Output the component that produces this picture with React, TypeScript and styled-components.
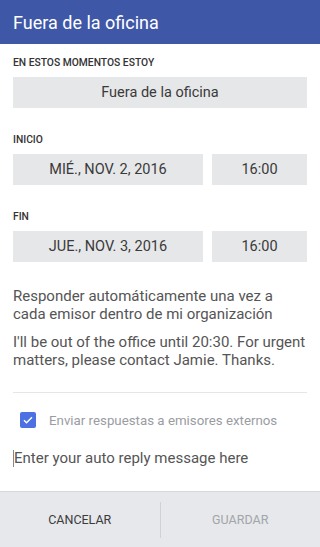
import styled, { createGlobalStyle } from "styled-components";

const Global = createGlobalStyle`
  html, body { margin: 0; padding: 0; background: #fff; }
  body { font-family: Roboto, "Noto Sans", Arial, sans-serif; }
  * { box-sizing: border-box; }
`;

const Screen = styled.div`
  width: 320px; height: 547px;
  display: flex; flex-direction: column;
  background: #fff;
  overflow: hidden;
`;
const Header = styled.header`
  height: 44px; flex: none;
  background: #3f57a7;
  color: #fff;
  display: flex; align-items: center;
  padding: 0 13px;
  font-size: 18px;
`;
const Body = styled.div`
  flex: 1;
  padding: 12px 13px 0;
  display: flex; flex-direction: column;
`;
const Label = styled.div`
  font-size: 10.3px; font-weight: 500;
  color: #333;
  height: 13px; line-height: 13px;
  margin-bottom: 8px;
`;
const Row = styled.div`
  display: flex; gap: 9px;
  margin-bottom: 25px;
`;
const Field = styled.div<{ $w?: number }>`
  height: 31px;
  background: #e6e7e9;
  color: #3a3a3a;
  font-size: 14.5px;
  display: flex; align-items: center; justify-content: center;
  ${(p) => (p.$w ? `width: ${p.$w}px;` : "flex: 1;")}
`;
const Para = styled.p`
  margin: 0 0 10px;
  font-size: 15px; line-height: 18px;
  color: #555;
`;
const Divider = styled.hr`
  border: none; border-top: 1px solid #e6e6e6;
  margin: 13px 0 0;
`;
const CheckRow = styled.label`
  display: flex; align-items: center; gap: 13px;
  height: 54px;
  padding-left: 7px;
  font-size: 13.3px; color: #9a9ca3;
`;
const Box = styled.span`
  width: 16px; height: 16px; border-radius: 2px;
  background: #4d70e3;
  display: flex; align-items: center; justify-content: center;
`;
const Reply = styled.div`
  font-size: 15px; color: #555;
  height: 22px; display: flex; align-items: center;
`;
const Cursor = styled.span`
  width: 1px; height: 17px; background: #888;
  margin-right: 0;
`;
const Footer = styled.footer`
  height: 56px; flex: none;
  background: #e6e8eb;
  border-top: 1px solid #d7d9dc;
  display: flex; align-items: center;
`;
const FootBtn = styled.button<{ $disabled?: boolean }>`
  flex: 1; height: 100%;
  background: none; border: none;
  font-family: inherit; font-size: 12.5px;
  color: ${(p) => (p.$disabled ? "#a3a5a8" : "#3b3b3b")};
`;
const VLine = styled.div`
  width: 1px; height: 36px; background: #cfd1d4;
`;

export default function App() {
  return (
    <Screen>
      <Global />
      <Header>Fuera de la oficina</Header>
      <Body>
        <Label>EN ESTOS MOMENTOS ESTOY</Label>
        <Row>
          <Field>Fuera de la oficina</Field>
        </Row>
        <Label>INICIO</Label>
        <Row>
          <Field>MIÉ., NOV. 2, 2016</Field>
          <Field $w={95}>16:00</Field>
        </Row>
        <Label>FIN</Label>
        <Row>
          <Field>JUE., NOV. 3, 2016</Field>
          <Field $w={95}>16:00</Field>
        </Row>
        <Para>Responder automáticamente una vez a cada emisor dentro de mi organización</Para>
        <Para>I'll be out of the office until 20:30. For urgent matters, please contact Jamie. Thanks.</Para>
        <Divider />
        <CheckRow>
          <Box>
            <svg width="12" height="12" viewBox="0 0 24 24">
              <path d="M4 12.5l5 5L20 6.5" fill="none" stroke="#fff" strokeWidth="3" />
            </svg>
          </Box>
          Enviar respuestas a emisores externos
        </CheckRow>
        <Reply>
          <Cursor />
          Enter your auto reply message here
        </Reply>
      </Body>
      <Footer>
        <FootBtn>CANCELAR</FootBtn>
        <VLine />
        <FootBtn $disabled>GUARDAR</FootBtn>
      </Footer>
    </Screen>
  );
}
